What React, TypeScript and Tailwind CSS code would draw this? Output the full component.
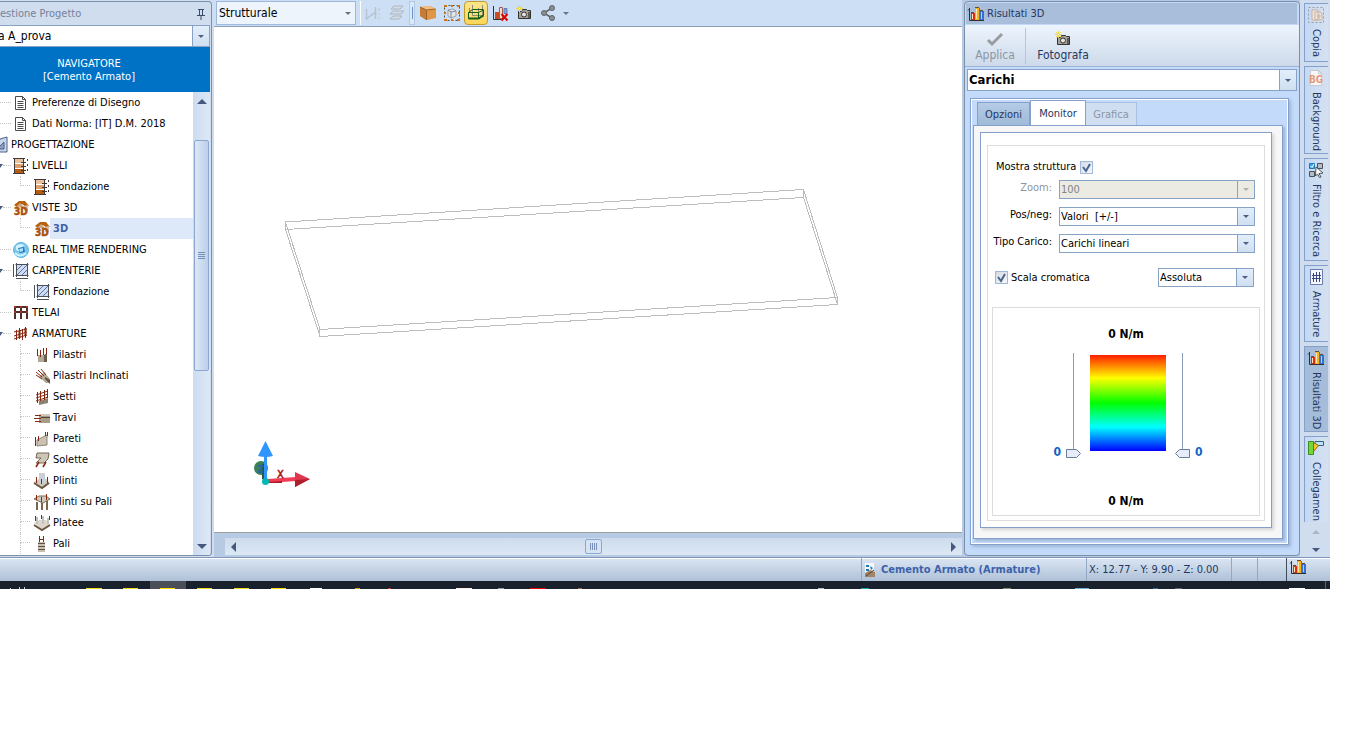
import type { ReactNode } from 'react';

type IconProps = { name: string; className?: string };

const steel = '#84290f';

const icons: Record<string, ReactNode> = {
  doc: (
    <g fill="none" stroke="#4a4a4a">
      <path d="M2.5 1.5h7l3 3v10h-10z" fill="#fff" />
      <path d="M9.5 1.5v3h3M4.5 6.5h6M4.5 8.5h6M4.5 10.5h6M4.5 12.5h6" />
    </g>
  ),
  project: (
    <g>
      <path d="M8 2l7-2v15H2z" fill="#c9d5ea" stroke="#4f6288" />
      <path d="M5 12l7-7v7z" fill="#8c9ec0" stroke="#4f6288" />
    </g>
  ),
  levels: (
    <g>
      <path d="M2 1h8v4H2z" fill="#e9c39f" />
      <path d="M2 6h8v4H2z" fill="#dda070" />
      <path d="M2 11h8v4H2z" fill="#b65c0c" />
      <path d="M1.5 1v14M10.5 1v14M0 .5h12M0 15.5h12" stroke="#3f3a38" />
      <path d="M8 4.5h5M8 8.5h5M8 12.5h5M14.5 1v2M14.5 6v2M14.5 11v2" stroke="#3f3a38" />
    </g>
  ),
  house3d: (
    <g>
      <path d="M1 5l5-4h6l4 5-3 1-4-3-5 3z" fill="#b8600c" />
      <path d="M4 6l3-3 4 4H4z" fill="#cda884" />
      <path d="M11 6l4-1v6h-4z" fill="#d5c3b0" />
      <text x="1" y="15" fontSize="10" fontWeight="bold" fill="#a9500a" stroke="#a9500a" strokeWidth=".5">
        3D
      </text>
    </g>
  ),
  globe: (
    <g>
      <circle cx="8" cy="8" r="7.5" fill="#7cc6ec" stroke="#5fb4e2" />
      <path d="M3 4q5-4 9 0-5 0-6 5Q2 9 3 4z" fill="#d5f2ff" />
      <path d="M5 6l6-1 1 5-5 1z" fill="#247bb7" />
      <path d="M6 7l4-1v3l-3 1z" fill="#aee5fa" />
      <path d="M2 11q5 5 11 0" stroke="#c9f2ff" fill="none" strokeWidth="2" />
    </g>
  ),
  carp: (
    <g fill="none" stroke="#4b4f57">
      <path d="M3.5 1.5h11v11h-11z" fill="#cfdcf3" stroke="#3f4a60" />
      <path d="M4 7l5-5M4 12L14 2M9 12l5-5" stroke="#5a73a5" />
      <path d="M.5 1v13M3 15.5h12M2.5 1.5h13M2.5 12.5h13M3.5 0v14M14.5 0v14" />
    </g>
  ),
  frame: (
    <g fill="none" stroke="#4d3029" strokeWidth="2">
      <path d="M2 14V2h12v12M8 14V2M2 7h12" />
      <path d="M1 2h2M7 2h2M13 2h2M1 7h2M7 7h2M13 7h2" stroke="#a8312a" />
    </g>
  ),
  mesh: (
    <g fill="none" stroke={steel}>
      <path d="M3.5 4v10M6.5 2v11M9.5 3v11M12.5 1v11" />
      <path d="M1 6l13-3M1 10l13-4M1 13l13-4" />
      <path d="M6.5 5v7M12.5 2v8" strokeWidth="2" />
    </g>
  ),
  pillar: (
    <g>
      <path d="M4 8h6v7H4z" fill="#b3a894" />
      <path d="M10 8l3-2v9h-3z" fill="#6b5e4d" />
      <path d="M3.5 2v7M6.5 3v7M9.5 1v7M12.5 1v6" stroke={steel} fill="none" />
    </g>
  ),
  pillarTilt: (
    <g>
      <path d="M5 9l5-5 6 7v4h-4z" fill="#b3a894" />
      <path d="M11 9l5 3v4l-5-5z" fill="#5e5140" />
      <path d="M2 4l6 5M4 2l6 6M7 1l5 6M2 7l6 4" stroke={steel} fill="none" />
    </g>
  ),
  wall: (
    <g>
      <path d="M5 12l9-3v5l-9 2z" fill="#8d8170" />
      <path d="M3.5 3v11M6.5 2v10M10.5 1v10M13.5 0v9M2 6l12-4M2 9l12-4M2 12l12-4" stroke={steel} fill="none" />
    </g>
  ),
  beam: (
    <g>
      <path d="M5 4h11v9H5z" fill="#a79c87" />
      <path d="M5 4h11v2H5z" fill="#d0c9b9" />
      <path d="M7 7.5h9" stroke="#51432f" />
      <path d="M1 5.5h6M0 8.5h7M1 11.5h6" stroke={steel} />
    </g>
  ),
  parete: (
    <g>
      <path d="M3 9l10-5v10L3 15z" fill="#c9c1b2" stroke="#8f8370" />
      <path d="M1.5 15V6M4.5 10V5M11.5 5V1M13.5 5V1" stroke={steel} fill="none" />
    </g>
  ),
  slab: (
    <g>
      <path d="M3 1h12l-1 6-4 4H2l5-5H2z" fill="#cec6b8" stroke="#75674f" />
      <path d="M5 10l-3 5M12 10l-3 5" stroke={steel} fill="none" strokeWidth="1.5" />
    </g>
  ),
  plinth: (
    <g>
      <path d="M0 9l5-3h7l4 4-7 5z" fill="#cfc8bb" />
      <path d="M0 10l8 5 7-5" stroke="#69573f" strokeWidth="2" fill="none" />
      <path d="M5 0h6v10H5z" fill="#cbd0d6" />
      <path d="M2.5 4v6M7.5 6v5M13.5 4v6" stroke={steel} />
    </g>
  ),
  plinthPiles: (
    <g>
      <path d="M0 5l5-3h7l4 3-7 4z" fill="#cfc8bb" stroke="#796b58" />
      <path d="M3 8v8M8 9v7M13 7v9" stroke="#7a6550" strokeWidth="2" />
      <path d="M2.5 1v5M7.5 3v5M12.5 0v6" stroke={steel} />
    </g>
  ),
  raft: (
    <g>
      <path d="M0 8l5-3h7l4 4-8 5z" fill="#ddd6c9" />
      <path d="M0 10l8 5 8-5" stroke="#69573f" strokeWidth="2" fill="none" />
      <path d="M3 2v7M9 1v8M14 3v6" stroke="#c0c4ca" strokeWidth="2" />
      <path d="M1.5 1v5M7.5 0v4M15.5 1v4" stroke={steel} />
    </g>
  ),
  pile: (
    <g>
      <path d="M4 6h7v10H4z" fill="#c6bfb2" />
      <path d="M4 7.5h7M4 10.5h7M4 13.5h7" stroke="#5e5242" />
      <path d="M5.5 0v6M9.5 0v6M5 3.5h5" stroke={steel} />
    </g>
  ),
  chart: (
    <g>
      <path d="M3 7h4v7H3z" fill="#d92b15" />
      <path d="M7 2h5v12H7z" fill="#f4b41b" />
      <path d="M12 5h4v9h-4z" fill="#376fd0" />
      <path d="M4.5 8v5M8.5 3v10" stroke="#ffe8b0" />
      <path d="M13.5 6v7" stroke="#b5d2fa" />
      <path d="M11.5 2v12" stroke="#a06a0c" />
      <path d="M3 6.5h3M7 1.5h4M12 4.5h3" stroke="#6a4a2a" />
      <path d="M1.5 2v12.5H16M0 4.5L1.5 3" fill="none" stroke="#303030" />
    </g>
  ),
  chartDelete: (
    <g>
      <path d="M3 7h4v7H3z" fill="#c94a27" />
      <path d="M7.5 2.5h3v11h-3z" fill="#efe0cc" stroke="#a05a50" />
      <path d="M12 3.5h3v5h-3z" fill="#7fa4df" stroke="#5f7fbc" />
      <path d="M1.5 1v13.5H9" fill="none" stroke="#303030" />
      <path d="M9.5 9l6 6.5M15.5 9l-6 6.5" stroke="#e00000" strokeWidth="2" />
    </g>
  ),
  camera: (
    <g>
      <path d="M2.5 6.5h3l1-2h4l1 1h3v8h-12z" fill="#a3a19b" stroke="#35332f" />
      <circle cx="8" cy="9.5" r="2.5" fill="#e4e3de" stroke="#35332f" />
      <path d="M12 7h2v6h-2z" fill="#5e5b55" />
      <path d="M3.5 0v7M0 3.5h7M1 1l5 5M6 1L1 6" stroke="#ead94c" />
      <path d="M3 3h1v1H3z" fill="#fff" />
    </g>
  ),
  cube: (
    <g>
      <path d="M0 2l10-1 6 3v9l-9 2-7-4z" fill="#df9647" />
      <path d="M0 2l10-1 6 3-9 1z" fill="#f1bf85" />
      <path d="M0 2l6 3v10l-6-4z" fill="#c47c36" />
      <path d="M6.5 5v10M0 2l6.5 3 9-1" stroke="#a05f22" fill="none" />
    </g>
  ),
  cubeSelect: (
    <g fill="none">
      <path d="M.5.5h15v15H.5z" stroke="#4d4d4d" strokeDasharray="2 2" />
      <path d="M0 1h3M13 1h3M0 15h3M13 15h3M7 1h2M7 15h2M0 8h2M14 8h2" stroke="#d17416" strokeWidth="2" />
      <path d="M4 5l5-1 3 2v5l-5 2-3-2z" fill="#e3e6ea" stroke="#9aa2aa" />
      <path d="M4 5l3 2 5-1M7 7v6" stroke="#7d8791" />
    </g>
  ),
  wire: (
    <g fill="none">
      <path d="M4.5 0v10.5H15M14.5 0v10M10.5 3v4M1.5 3v4" stroke="#8b8f78" />
      <path d="M.5 7.5h10v6H.5zM10.5 13.5l5-3V5l-5 2.5M.5 7.5l4-3h11" stroke="#145f1c" />
      <path d="M.5 13.5h10l5-3" stroke="#145f1c" strokeWidth="2" />
    </g>
  ),
  levelsOff: (
    <g fill="none" stroke="#b8c2cf">
      <path d="M1.5 4v10l9-7v7M10.5 2v4" strokeWidth="1.5" />
      <path d="M14 3v3M14 8v2M14 12v2" />
    </g>
  ),
  layersOff: (
    <g fill="#d4dce6" stroke="#acb5c1">
      <path d="M1 14l3-3h9l-3 3zM1 9l3-3h11l-3 3zM2 4l3-3h9l-3 3z" />
    </g>
  ),
  share: (
    <g fill="#8b8e92" stroke="#606468">
      <path d="M4 8l8-5M4 8l8 5" strokeWidth="1.5" />
      <circle cx="4" cy="8" r="2.5" />
      <circle cx="12" cy="3" r="2.5" />
      <circle cx="12" cy="13" r="2.5" />
    </g>
  ),
  check: <path d="M1 9l4 4L15 3" fill="none" stroke="#999da1" strokeWidth="3" />,
  copy: (
    <g fill="none" opacity=".6">
      <path d="M.5.5h15v15H.5z" stroke="#777" strokeDasharray="2 2" />
      <path d="M4 3h6v10H4zM7 5h5l2 2v6H7z" fill="#f4ede4" stroke="#d5935c" />
      <path d="M9 9h4M11 7v5" stroke="#d5935c" />
    </g>
  ),
  bg: (
    <g>
      <path d="M2.5.5h8l3 3v12h-11z" fill="#f6f7f9" stroke="#c5cbd3" />
      <path d="M10.5.5v3h3" fill="none" stroke="#c5cbd3" />
    </g>
  ),
  filter: (
    <g fill="none" stroke="#4b5058">
      <path d="M1.500 1.500h5v5h-5z" fill="#3aa5e8" stroke="#1b79bb" />
      <path d="M2.500 4L4 5.500 6 2" stroke="#fff" />
      <path d="M9.500 1.500h5v5h-5zM1.500 9.500h5v5h-5z" fill="#b3bcc7" />
      <path d="M8 5l7 6-4 .5 2 3.500-1.500.5-2-3.500-2 2z" fill="#fff" />
    </g>
  ),
  rebar: (
    <g fill="none" stroke="#6b7bab">
      <path d="M2.5.5h12v15h-12z" fill="#f5f8fd" />
      <path d="M5.500 4v9M8.500 3v10M11.500 3v10M4 6.500h9M4 9.500h9" stroke="#37487c" />
    </g>
  ),
  link: (
    <g>
      <path d="M.5 1.500h5v13h-5z" fill="#75d63a" stroke="#3c8c1e" />
      <path d="M7 1.500h8.500v4H7z" fill="#b9e3fa" stroke="#34657f" />
      <path d="M5.500 2.500l5 3-5 6z" fill="#f7c62e" stroke="#8b6a12" />
    </g>
  ),
  status: (
    <g>
      <path d="M3 1h9v14H3z" fill="#f6f8fa" />
      <path d="M4 3h3v2H4zM8 4l3 2-2 2zM4 7h3v2H4z" fill="#2378b4" />
      <path d="M3 11l5-3 5 2v5H3z" fill="#a28566" />
      <path d="M4 14l8-6" stroke="#544334" />
    </g>
  ),
  pin: <path d="M5 3.500h6M6.500 4v5M9.500 4v5M4 9.500h8M8 10v4" fill="none" stroke="#3b4c6b" />,
};

const Icon = ({ name, className = 'size-4' }: IconProps) => (
  <svg viewBox="0 0 16 16" className={`shrink-0 overflow-visible ${className}`} aria-hidden="true">
    {icons[name]}
  </svg>
);

const Caret = ({ className = 'text-[#4c5f85]' }: { className?: string }) => (
  <svg viewBox="0 0 6 3" className={`h-[3px] w-1.5 shrink-0 ${className}`} aria-hidden="true">
    <path d="M0 0h6L3 3z" fill="currentColor" />
  </svg>
);

const Arrow = ({ d, className = 'text-[#46587f]' }: { d: string; className?: string }) => (
  <svg viewBox="0 0 10 10" className={`size-2.5 shrink-0 ${className}`} aria-hidden="true">
    <path d={d} fill="currentColor" />
  </svg>
);

type ComboProps = { id: string; label?: string; value: string; disabled?: boolean; className?: string; textClass?: string };

const Combo = ({ id, label, value, disabled, className = '', textClass = '' }: ComboProps) => (
  <div className={`flex border border-[#86a3c6] ${disabled ? 'bg-[#ebebe4]' : 'bg-white'} ${className}`}>
    <select
      id={id}
      aria-label={label}
      disabled={disabled}
      className={`min-w-0 flex-1 appearance-none bg-transparent pl-px whitespace-pre outline-none disabled:text-[#838383] disabled:opacity-100 ${textClass}`}
    >
      <option>{value}</option>
    </select>
    <span
      className={`flex w-[17px] items-center justify-center border-l border-[#86a3c6] ${
        disabled ? 'bg-[#ebebe4]' : 'bg-linear-to-b from-[#e3eefb] to-[#cfdff1]'
      }`}
    >
      <Caret className={disabled ? 'text-[#b0b0b0]' : 'text-[#4c5f85]'} />
    </span>
  </div>
);

type Node = { label: string; icon: string; level: number; open?: boolean; last?: boolean; selected?: boolean };

const tree: Node[] = [
  { label: 'Preferenze di Disegno', icon: 'doc', level: 1 },
  { label: 'Dati Norma: [IT] D.M. 2018', icon: 'doc', level: 1 },
  { label: 'PROGETTAZIONE', icon: 'project', level: 0 },
  { label: 'LIVELLI', icon: 'levels', level: 1, open: true },
  { label: 'Fondazione', icon: 'levels', level: 2, last: true },
  { label: 'VISTE 3D', icon: 'house3d', level: 1, open: true },
  { label: '3D', icon: 'house3d', level: 2, last: true, selected: true },
  { label: 'REAL TIME RENDERING', icon: 'globe', level: 1 },
  { label: 'CARPENTERIE', icon: 'carp', level: 1, open: true },
  { label: 'Fondazione', icon: 'carp', level: 2, last: true },
  { label: 'TELAI', icon: 'frame', level: 1 },
  { label: 'ARMATURE', icon: 'mesh', level: 1, open: true },
  { label: 'Pilastri', icon: 'pillar', level: 2 },
  { label: 'Pilastri Inclinati', icon: 'pillarTilt', level: 2 },
  { label: 'Setti', icon: 'wall', level: 2 },
  { label: 'Travi', icon: 'beam', level: 2 },
  { label: 'Pareti', icon: 'parete', level: 2 },
  { label: 'Solette', icon: 'slab', level: 2 },
  { label: 'Plinti', icon: 'plinth', level: 2 },
  { label: 'Plinti su Pali', icon: 'plinthPiles', level: 2 },
  { label: 'Platee', icon: 'raft', level: 2 },
  { label: 'Pali', icon: 'pile', level: 2 },
];

const TreeRow = ({ node }: { node: Node }) => (
  <li className="flex h-[21px] items-center">
    {node.level === 0 && <Icon name={node.icon} className="-ml-2 size-4" />}
    {node.level === 1 && (
      <>
        <span className="flex w-[13px] items-center pr-0.5">
          {node.open && (
            <svg viewBox="0 0 3 4" className="h-1 w-[3px]" aria-hidden="true">
              <path d="M0 0h3L0 4z" fill="#46587f" />
            </svg>
          )}
          <span className="flex-1 border-t border-dotted border-[#c4c4c4]" />
        </span>
        <Icon name={node.icon} />
      </>
    )}
    {node.level === 2 && (
      <>
        <span className="ml-5 flex w-3.5 flex-col self-stretch pr-1">
          <span className="h-[10px] border-b border-l border-dotted border-[#c4c4c4]" />
          {!node.last && <span className="flex-1 border-l border-dotted border-[#c4c4c4]" />}
        </span>
        <Icon name={node.icon} />
      </>
    )}
    <a
      href="#"
      className={`flex h-full flex-1 items-center pl-[3px] whitespace-nowrap ${
        node.selected ? 'bg-[#dde9f9] font-bold text-[#3d62ab]' : 'text-black'
      }`}
    >
      {node.label}
    </a>
  </li>
);

const Navigator = () => (
  <aside className="w-[214px] shrink-0 bg-[#d0ddee] pt-px pr-0.5 pb-px">
    <div className="flex h-full flex-col overflow-hidden rounded-r-sm border border-l-0 border-[#7b8fa9]">
      <header className="flex h-[23px] items-center justify-between pr-0.5 text-[#75829c]">
        <h2>estione Progetto</h2>
        <button aria-label="Blocca" className="flex size-4 items-center justify-center">
          <Icon name="pin" />
        </button>
      </header>
      <div className="flex flex-1 flex-col pr-px">
        <Combo id="project" label="Progetto" value="a A_prova" className="-ml-1 h-[22px]" textClass="text-xs" />
        <div className="flex h-[45px] flex-col items-center justify-center bg-[#0072c6] pr-8 text-white">
          <span className="leading-[13px]">NAVIGATORE</span>
          <span className="leading-[13px]">[Cemento Armato]</span>
        </div>
        <div className="flex flex-1 bg-white">
          <ul className="min-w-0 flex-1 overflow-hidden">
            {tree.map((node, i) => (
              <TreeRow key={i} node={node} />
            ))}
          </ul>
          <div className="flex w-[17px] flex-col items-center bg-linear-to-r from-[#ccdcf0] to-[#dce8f5]">
            <button aria-label="Su" className="flex h-[18px] w-full items-center justify-center">
              <Arrow d="M0 8h10L5 3z" />
            </button>
            <div className="mt-[30px] flex h-[231px] w-[15px] flex-col items-center justify-center gap-px rounded-xs border border-[#8ba6cf] bg-linear-to-r from-[#dde8f6] to-[#bccfea]">
              <span className="h-px w-[7px] bg-[#7890bb]" />
              <span className="h-px w-[7px] bg-[#7890bb]" />
              <span className="h-px w-[7px] bg-[#7890bb]" />
              <span className="h-px w-[7px] bg-[#7890bb]" />
            </div>
            <button aria-label="Giù" className="mt-auto flex h-[18px] w-full items-center justify-center">
              <Arrow d="M0 3h10L5 8z" />
            </button>
          </div>
        </div>
      </div>
    </div>
  </aside>
);

const ToolButton = ({ name, label, active }: { name: string; label: string; active?: boolean }) => (
  <button
    aria-label={label}
    className={`flex size-6 items-center justify-center rounded-sm ${
      active ? 'border border-[#c29b29] bg-linear-to-b from-[#fbe48a] to-[#fcd65a]' : ''
    }`}
  >
    <Icon name={name} />
  </button>
);

const Toolbar = () => (
  <div className="flex h-[26px] items-center bg-[#cddff5] pl-0.5">
    <div className="flex h-6 w-[140px] items-center border border-[#9db8db] bg-[#edf4fc] pr-1">
      <select aria-label="Vista" className="min-w-0 flex-1 appearance-none pl-0.5 text-xs outline-none">
        <option>Strutturale</option>
      </select>
      <Caret className="text-[#6b7280]" />
    </div>
    <div className="ml-1 flex items-center border-l border-white">
      <ToolButton name="levelsOff" label="Quote" />
      <ToolButton name="layersOff" label="Piani" />
    </div>
    <span className="flex h-6 w-1.5 items-center justify-center border border-[#b3c9e6] bg-[#dbe8f8]">
      <span className="h-3 w-px bg-[#6f95c7]" />
    </span>
    <div className="ml-px flex items-center">
      <ToolButton name="cube" label="Solido" />
      <ToolButton name="cubeSelect" label="Selezione" />
      <ToolButton name="wire" label="Filo di ferro" active />
      <ToolButton name="chartDelete" label="Elimina risultati" />
      <ToolButton name="camera" label="Fotografa vista" />
      <ToolButton name="share" label="Condividi" />
      <button aria-label="Altro" className="flex h-6 w-3 items-center justify-center">
        <Caret className="text-[#6b7280]" />
      </button>
    </div>
  </div>
);

/* Wireframe slab plus the axis triad */
const Scene = () => (
  <svg viewBox="214 27 748 505" className="block h-[505px] w-[748px]" aria-label="Vista 3D">
    <g fill="none" stroke="#bcbcbc" shapeRendering="crispEdges">
      <path d="M285.500 222L803.500 189.500L837.500 297.500L320 329.500Z" />
      <path d="M285.500 229.500L803.500 197.500L837.500 304.500L320 336.500Z" />
      <path d="M285.500 222v7M803.500 190v7M837.500 297v7M319.500 329v7" />
    </g>
    <circle cx="261" cy="468" r="7" fill="#3c8053" />
    <path d="M262 464l5-1v18l-5-2z" fill="#2c5b3a" />
    <text x="257" y="473" fontSize="11" fontWeight="bold" fill="#1f65ad">
      Z
    </text>
    <path d="M268 479l28-2v4l-28 2z" fill="#ef3d55" />
    <path d="M268 482l14-1v2h-14z" fill="#b01e2e" />
    <path d="M295 472l15 7-15 8z" fill="#e03750" />
    <path d="M295 480l15-1-15 8z" fill="#b01e2e" />
    <path d="M264 455h3v26h-3z" fill="#2f97fb" />
    <path d="M265.500 441l7.500 15q-7 2-15 0z" fill="#2f97fb" />
    <circle cx="265.500" cy="481.500" r="3.500" fill="#00b9b4" />
    <text x="277" y="478" fontSize="11" fill="#a81616" stroke="#a81616" strokeWidth=".5">
      X
    </text>
  </svg>
);

const Viewport = () => (
  <main className="flex min-w-0 flex-1 flex-col bg-[#b7cae4]">
    <Toolbar />
    <div className="flex-1 overflow-hidden border-t border-b border-t-[#8c9db8] border-b-[#a0a0a0] bg-white">
      <Scene />
    </div>
    <div className="flex h-6 shrink-0 flex-col justify-end pb-0.5 pl-[11px]">
      <div className="flex h-[17px] items-center bg-linear-to-b from-[#cddbec] to-[#dce8f4] pr-1 pl-1">
        <button aria-label="Sinistra">
          <Arrow d="M7 0v10L2 5z" />
        </button>
        <div className="flex flex-1 justify-center">
          <div className="flex h-[15px] w-[17px] items-center justify-center gap-px rounded-xs border border-[#8ba6cf] bg-[#d6e3f2]">
            <span className="h-[7px] w-px bg-[#7890bb]" />
            <span className="h-[7px] w-px bg-[#7890bb]" />
            <span className="h-[7px] w-px bg-[#7890bb]" />
            <span className="h-[7px] w-px bg-[#7890bb]" />
          </div>
        </div>
        <button aria-label="Destra">
          <Arrow d="M3 0v10l5-5z" />
        </button>
      </div>
    </div>
  </main>
);

const Check = ({ id }: { id: string }) => (
  <span className="relative size-[13px] shrink-0">
    <input
      id={id}
      type="checkbox"
      defaultChecked
      className="peer block size-[13px] appearance-none border border-[#9fb9dd] bg-linear-to-br from-[#d5dae2] to-[#f7f8fa]"
    />
    <svg viewBox="0 0 13 13" className="pointer-events-none absolute inset-0 hidden size-[13px] peer-checked:block" aria-hidden="true">
      <path d="M3 6l3 4 4-7" fill="none" stroke="#45658f" strokeWidth="2" />
    </svg>
  </span>
);

const Slider = ({ flip }: { flip?: boolean }) => (
  <div className="relative h-[106px] w-4">
    <input
      type="range"
      aria-label={flip ? 'Limite destro' : 'Limite sinistro'}
      defaultValue="0"
      className="absolute inset-0 h-full w-full opacity-0 [writing-mode:vertical-lr]"
    />
    <svg viewBox="0 0 16 106" className={`pointer-events-none h-full w-full ${flip ? '-scale-x-100' : ''}`} aria-hidden="true">
      <path d="M8.500 0v97" stroke="#8a9bbd" />
      <path d="M1.500 96.500h10l4 4-4 4h-10z" fill="#e6edf8" stroke="#6a7c9c" />
    </svg>
  </div>
);

const Field = ({ id, label, value, disabled }: { id: string; label: string; value: string; disabled?: boolean }) => (
  <div className="flex">
    <label htmlFor={id} className={`w-[60px] text-right leading-4 whitespace-nowrap ${disabled ? 'text-[#8c96a4]' : 'text-black'}`}>
      {label}
    </label>
    <Combo id={id} value={value} disabled={disabled} className="ml-[7px] h-[19px] flex-1" />
  </div>
);

const Monitor = () => (
  <div className="border border-[#dcdcdc] p-1 pt-[13px]">
    <div className="flex h-4 items-center gap-1 pl-1">
      <label htmlFor="show">Mostra struttura</label>
      <Check id="show" />
    </div>
    <div className="mt-[5px] mr-[5px] flex flex-col gap-2">
      <Field id="zoom" label="Zoom:" value="100" disabled />
      <Field id="sign" label="Pos/neg:" value={'Valori \u00a0[+/-]'} />
      <Field id="kind" label="Tipo Carico:" value="Carichi lineari" />
    </div>
    <div className="mt-[15px] mr-1.5 flex h-[19px] items-center gap-[3px] pl-[3px]">
      <Check id="scale" />
      <label htmlFor="scale">Scala cromatica</label>
      <Combo id="mode" label="Scala" value="Assoluta" className="ml-auto h-[19px] w-24" />
    </div>
    <div className="mt-5 flex h-[209px] flex-col items-center border border-[#dcdcdc] pt-5 font-bold">
      <p className="h-3 text-xs leading-3">0 N/m</p>
      <div className="mt-[13px] ml-1 flex">
        <span className="mr-1 self-end text-xs leading-[14px] text-[#1263c4]">0</span>
        <Slider />
        <div className="mx-[9px] mt-0.5 h-24 w-[76px] bg-[linear-gradient(#ff1e00,#ffff00_24%,#00ff00_50%,#00ffff_75%,#0000ff)]" />
        <Slider flip />
        <span className="ml-1 self-end text-xs leading-[14px] text-[#1263c4]">0</span>
      </div>
      <p className="mt-9 text-xs leading-3">0 N/m</p>
    </div>
  </div>
);

const Results = () => (
  <section className="w-[338px] shrink-0 bg-[#b7cae4] pt-px pb-px pl-0.5">
    <div className="flex h-full flex-col rounded-sm border border-[#7b8fa9] bg-[#c3dafa]">
      <header className="m-px mr-0.5 flex h-[21px] items-center gap-[3px] bg-[#a8bedb] pl-0.5 text-[#24385f]">
        <Icon name="chart" />
        <h2>Risultati 3D</h2>
      </header>
      <div className="flex h-[42px] items-center border-b border-[#9cb4d3] bg-linear-to-b from-[#edf4fd] to-[#cddaea] text-xs">
        <button disabled className="flex h-9 w-[61px] flex-col items-center border-r border-[#b5c6dc] pt-[3px] text-[#8d96a3]">
          <Icon name="check" />
          Applica
        </button>
        <button className="flex h-9 w-[74px] flex-col items-center pt-[3px] text-[#24385f]">
          <Icon name="camera" />
          Fotografa
        </button>
      </div>
      <Combo id="result" label="Risultato" value="Carichi" className="mx-0.5 mt-0.5 h-[22px]" textClass="text-[13px] font-bold" />
      <div className="mt-[7px] mr-2.5 mb-2.5 ml-[5px] flex flex-1 flex-col border border-[#86a0cc] shadow-[2px_2px_3px_#9fb6d8]">
        <div className="flex flex-1 flex-col border border-white p-px pt-0 pr-1 pb-1">
          <div role="tablist" className="flex items-end pl-1 text-[#24385f]">
            <button role="tab" className="h-[23px] w-[53px] border border-b-0 border-[#86a0cc] bg-linear-to-b from-[#b5cbe6] to-[#a0bad9] pt-0.5">
              Opzioni
            </button>
            <button role="tab" aria-selected="true" className="h-[25px] w-[56px] border border-b-0 border-[#86a0cc] bg-white pt-0.5">
              Monitor
            </button>
            <button role="tab" disabled className="h-[23px] w-[51px] border border-b-0 border-l-0 border-[#a8c0e2] bg-[#cfdef0] pt-0.5 text-[#8d96a3]">
              Grafica
            </button>
          </div>
          <div className="flex flex-1 flex-col border border-[#86a0cc] bg-[#f7f7f7] p-1.5 pr-2.5 pb-2.5 shadow-[2px_2px_2px_#9fb6d8]">
            <div className="flex-1 border border-[#86a0cc] bg-white p-1.5 pt-3 shadow-[2px_2px_3px_#d4d4d4]">
              <Monitor />
            </div>
          </div>
        </div>
      </div>
    </div>
  </section>
);

const sideTabs = [
  { label: 'Copia', icon: 'copy', size: 'h-[59px]' },
  { label: 'Background', icon: 'bg', size: 'h-[88px]' },
  { label: 'Filtro e Ricerca', icon: 'filter', size: 'h-[103px]' },
  { label: 'Armature', icon: 'rebar', size: 'h-[77px]' },
  { label: 'Risultati 3D', icon: 'chart', size: 'h-[86px]', active: true },
  { label: 'Collegamen', icon: 'link', size: 'h-[86px] border-b-0' },
];

const SideTabs = () => (
  <nav className="flex w-[30px] shrink-0 flex-col gap-1 bg-[#d0ddee] pt-[3px] pr-0.5 pl-1">
    {sideTabs.map((tab) => (
      <button
        key={tab.label}
        className={`flex flex-col items-center gap-1.5 border border-r-0 border-[#86a0cc] pt-[3px] pr-px text-[#24385f] ${tab.size} ${
          tab.active ? 'bg-[#a6bdda]' : 'bg-linear-to-r from-[#c5d9f4] to-[#d5e1f0]'
        }`}
      >
        <span className="relative shrink-0">
          <Icon name={tab.icon} />
          {tab.icon === 'bg' && <span className="absolute inset-x-0 bottom-0 text-[10px] leading-3 font-bold text-[#e59a7c]">BG</span>}
        </span>
        <span className="whitespace-nowrap [writing-mode:vertical-rl]">{tab.label}</span>
      </button>
    ))}
    <div className="mt-auto flex flex-col items-center gap-2 pb-0.5">
      <Arrow d="M1 7h8L5 3z" className="text-[#a9b5c7]" />
      <Arrow d="M1 3h8L5 7z" />
    </div>
  </nav>
);

const StatusBar = () => (
  <footer className="flex h-6 items-stretch border-t border-[#7f97b8] bg-linear-to-b from-[#dbe6f4] to-[#afc1d7] text-[#24385f] shadow-[inset_0_1px_#fff]">
    <div className="ml-auto flex w-[225px] items-center gap-[3px] border-l border-[#93a8c4] font-bold text-[#3d62ab]">
      <Icon name="status" />
      <span className="whitespace-nowrap">Cemento Armato (Armature)</span>
    </div>
    <div className="flex w-[145px] items-center border-l border-[#93a8c4] pl-0.5 whitespace-nowrap">X: 12.77 - Y: 9.90 - Z: 0.00</div>
    <div className="w-[26px] border-l border-[#93a8c4]" />
    <div className="w-[29px] border-l border-[#93a8c4]" />
    <div className="w-[44px] border-l border-[#3f4c60] pt-px pl-[3px]">
      <Icon name="chart" />
    </div>
  </footer>
);

const taskIcons = [
  [86, 16, '#f5dd18'],
  [123, 15, '#f5dd18'],
  [160, 15, '#ffe200'],
  [197, 15, '#f5dd18'],
  [234, 15, '#f5dd18'],
  [271, 15, '#ffe200'],
  [310, 12, '#ffffff'],
  [355, 5, '#d9a800'],
  [388, 3, '#c8402c'],
  [456, 16, '#fdeeea'],
  [498, 6, '#9a9fa6'],
  [530, 16, '#f00000'],
  [578, 4, '#b06a3a'],
  [818, 6, '#b9bec5'],
  [861, 8, '#16a6b4'],
  [1003, 8, '#8e8a78'],
  [1075, 14, '#6fb3d6'],
  [1153, 5, '#2472a0'],
  [1175, 7, '#67666a'],
  [1289, 16, '#ffffff'],
] as const;

const Taskbar = () => (
  <div className="h-2 overflow-hidden bg-[#18212c]">
    <svg viewBox="0 0 1330 8" className="block h-2 w-[1330px]" aria-hidden="true">
      <path d="M150 0h36v8h-36z" fill="#4b4f57" />
      {taskIcons.map(([x, w, fill]) => (
        <rect key={x} x={x} y="7" width={w} height="1" fill={fill} />
      ))}
      <path d="M10 7.500h1M19.500 6v2M24.500 6v2" stroke="#cfd3d8" />
      <path d="M1325.500 0v8" stroke="#5c636c" />
    </svg>
  </div>
);

const App = () => (
  <div className="min-h-screen bg-white font-['DejaVu_Sans_Condensed','DejaVu_Sans',sans-serif] text-[11px] leading-[14px]">
    <div className="mr-9 flex flex-col">
      <div className="flex">
        <Navigator />
        <Viewport />
        <Results />
        <SideTabs />
      </div>
      <StatusBar />
      <Taskbar />
    </div>
  </div>
);

export default App;
